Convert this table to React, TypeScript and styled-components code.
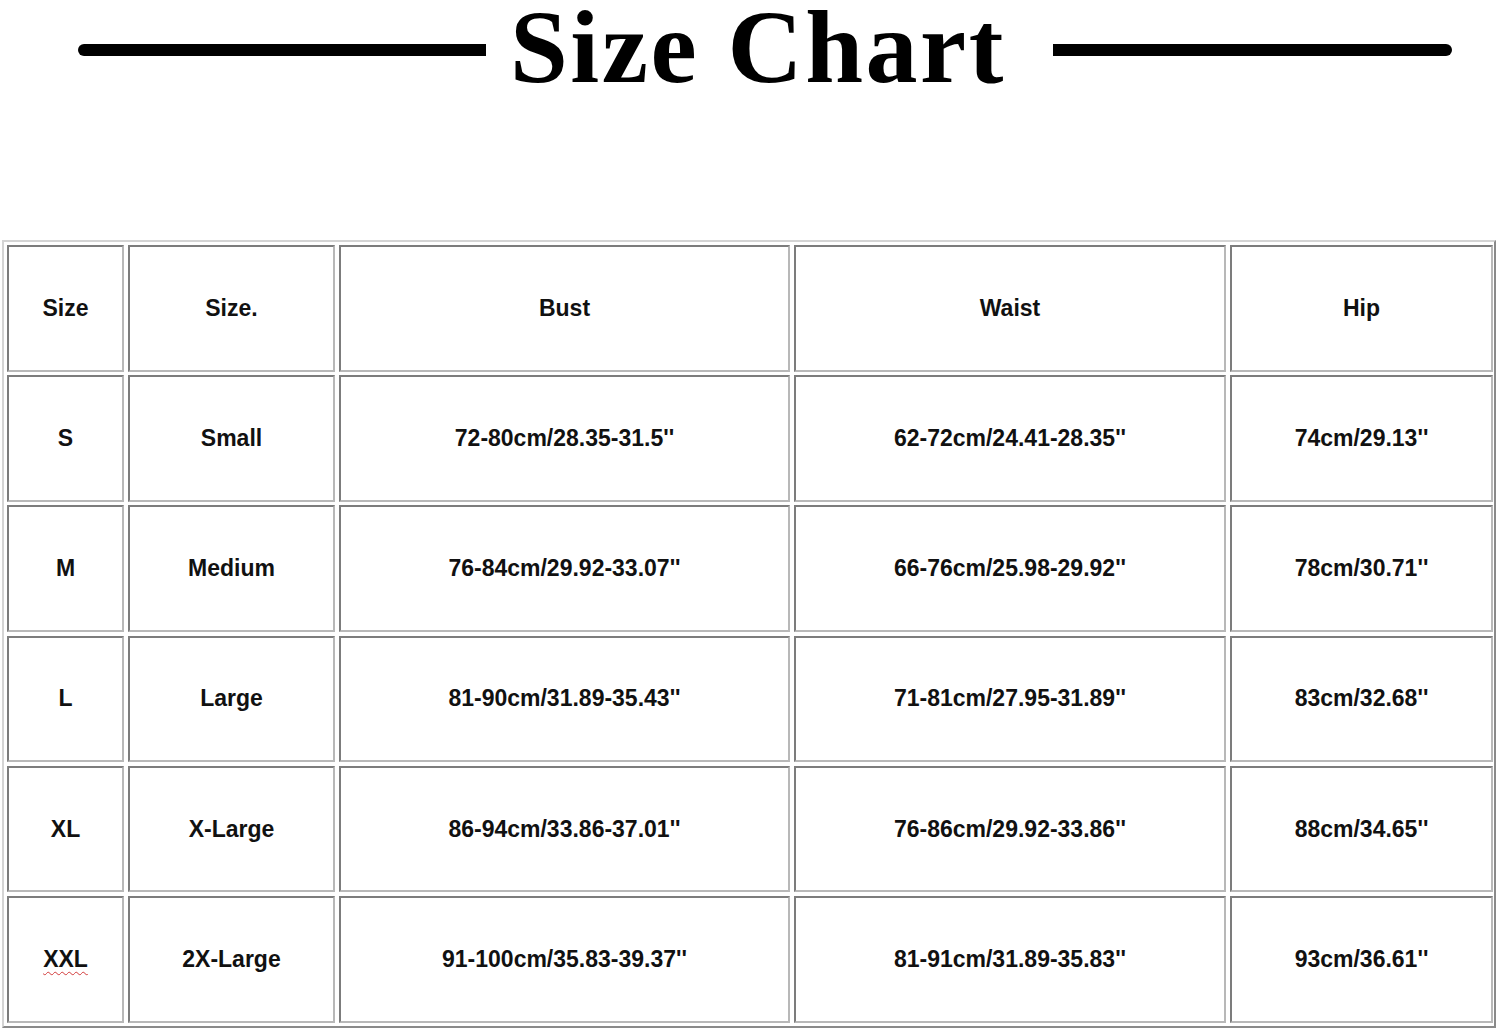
import React from 'react'
import styled, { createGlobalStyle } from 'styled-components'

const GlobalStyle = createGlobalStyle`
    html, body {
        margin: 0;
        padding: 0;
        background: #ffffff;
    }
`

const headers = ['Size', 'Size.', 'Bust', 'Waist', 'Hip']

const rows = [
    ['S', 'Small', "72-80cm/28.35-31.5''", "62-72cm/24.41-28.35''", "74cm/29.13''"],
    ['M', 'Medium', "76-84cm/29.92-33.07''", "66-76cm/25.98-29.92''", "78cm/30.71''"],
    ['L', 'Large', "81-90cm/31.89-35.43''", "71-81cm/27.95-31.89''", "83cm/32.68''"],
    ['XL', 'X-Large', "86-94cm/33.86-37.01''", "76-86cm/29.92-33.86''", "88cm/34.65''"],
    ['XXL', '2X-Large', "91-100cm/35.83-39.37''", "81-91cm/31.89-35.83''", "93cm/36.61''"],
]

export default function App() {
    return (
        <Page>
            <GlobalStyle />

            <TitleRow>
                <Rule $width={408} $side="left" />
                <Title>Size Chart</Title>
                <Rule $width={399} $side="right" />
            </TitleRow>

            <Table>
                {headers.map((h) => (
                    <Cell key={h}>{h}</Cell>
                ))}
                {rows.map((row) =>
                    row.map((value, i) => (
                        <Cell key={row[0] + i}>
                            {value === 'XXL' ? <Misspelled>{value}</Misspelled> : value}
                        </Cell>
                    ))
                )}
            </Table>
        </Page>
    )
}

const Page = styled.div`
    width: 1500px;
    height: 1031px;
    overflow: hidden;
    display: flex;
    flex-direction: column;
`

const TitleRow = styled.div`
    height: 240px;
    display: flex;
    align-items: flex-start;
    padding-left: 78px;
`

const Rule = styled.div<{ $width: number; $side: 'left' | 'right' }>`
    flex: none;
    width: ${(p) => p.$width}px;
    height: 12px;
    margin-top: 44px;
    background: #000;
    border-radius: ${(p) => (p.$side === 'left' ? '6px 0 0 6px' : '0 6px 6px 0')};
`

const Title = styled.h1`
    flex: none;
    margin: 2px 47px 0 24px;
    font-family: "Liberation Serif", "Times New Roman", serif;
    font-weight: 700;
    font-size: 104px;
    line-height: 90px;
    letter-spacing: 2.5px;
    white-space: nowrap;
    color: #000;
`

const Table = styled.div`
    margin-left: 2px;
    width: 1494px;
    box-sizing: border-box;
    display: grid;
    grid-template-columns: 117px 207px 451px 432px 263px;
    grid-auto-rows: 126.6px;
    column-gap: 4px;
    row-gap: 3.6px;
    padding: 3px 2px 3px 3px;
    border: 2px solid;
    border-color: #d4d4d4 #8a8a8a #8a8a8a #d4d4d4;
`

const Cell = styled.div`
    box-sizing: border-box;
    display: flex;
    align-items: center;
    justify-content: center;
    border: 2px solid;
    border-color: #7c7c7c #b8b8b8 #b8b8b8 #7c7c7c;
    font-family: "Liberation Sans", Arial, sans-serif;
    font-weight: 700;
    font-size: 23px;
    color: #111;
`

const Misspelled = styled.span`
    text-decoration: underline wavy #d23a3a;
    text-decoration-thickness: 1px;
    text-underline-offset: 4px;
`
